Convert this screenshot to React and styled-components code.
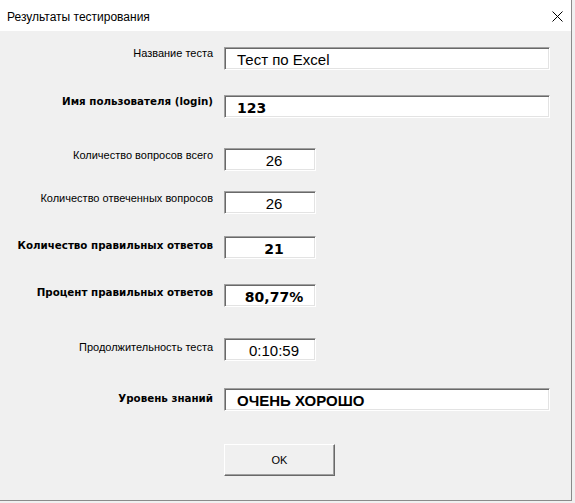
import React from "react";
import styled, { createGlobalStyle } from "styled-components";

const GlobalStyle = createGlobalStyle`
  html, body {
    margin: 0;
    padding: 0;
    background: #f0f0f0;
  }
`;

const rows = [
  { label: "Название теста", value: "Тест по Excel", wide: true, gap: 16, lift: 0 },
  { label: "Имя пользователя (login)", value: "123", wide: true, bold: true, strong: true, gap: 25, lift: 0 },
  { label: "Количество вопросов всего", value: "26", gap: 30, lift: 1 },
  { label: "Количество отвеченных вопросов", value: "26", gap: 20, lift: 1 },
  { label: "Количество правильных ответов", value: "21", bold: true, strong: true, gap: 22, lift: 3 },
  { label: "Процент правильных ответов", value: "80,77%", bold: true, strong: true, gap: 25, lift: 2 },
  { label: "Продолжительность теста", value: "0:10:59", gap: 31, lift: 3 },
  { label: "Уровень знаний", value: "ОЧЕНЬ ХОРОШО", wide: true, bold: true, caps: true, gap: 27, lift: 4 },
];

const Results = () => {
  return (
    <>
      <GlobalStyle />
      <Window>
        <TitleBar>
          <Title>Результаты тестирования</Title>
          <Close aria-label="close">
            <svg width="11" height="11" viewBox="0 0 11 11">
              <path d="M0.5 0.5 L10.5 10.5 M10.5 0.5 L0.5 10.5" stroke="#000" strokeWidth="1" />
            </svg>
          </Close>
        </TitleBar>
        <Content>
          {rows.map((r) => (
            <Row key={r.label} gap={r.gap}>
              <Label bold={r.bold} lift={r.lift}>{r.label}</Label>
              <Field wide={r.wide}>
                <Value wide={r.wide} strong={r.strong} caps={r.caps}>
                  {r.value}
                </Value>
              </Field>
            </Row>
          ))}
          <Row gap={33}>
            <Spacer />
            <Button type="button">OK</Button>
          </Row>
        </Content>
      </Window>
    </>
  );
};

const Window = styled.div`
  width: 571px;
  height: 500px;
  display: flex;
  flex-direction: column;
  border-right: 1px solid #8a8a8a;
  border-bottom: 1px solid #8a8a8a;
  background: #f0f0f0;
`;

const TitleBar = styled.div`
  height: 31px;
  background: #fff;
  display: flex;
  align-items: center;
  justify-content: space-between;
  padding: 0 8px 0 7px;
  box-sizing: border-box;
`;

const Title = styled.span`
  font-family: "Liberation Sans", Arial, sans-serif;
  font-size: 12px;
  color: #000;
  margin-top: 2px;
`;

const Close = styled.div`
  display: flex;
  width: 11px;
  height: 11px;
  margin-top: 1px;
`;

const Content = styled.div`
  flex: 1;
  display: flex;
  flex-direction: column;
`;

const Row = styled.div`
  display: flex;
  align-items: flex-start;
  margin-top: ${(p) => p.gap}px;
`;

const Label = styled.div`
  width: 213px;
  padding-right: 11px;
  box-sizing: content-box;
  text-align: right;
  font-family: ${(p) =>
    p.bold ? '"DejaVu Sans", Verdana, sans-serif' : '"Liberation Sans", Arial, sans-serif'};
  font-size: ${(p) => (p.bold ? "10.3px" : "11px")};
  font-weight: ${(p) => (p.bold ? 700 : 400)};
  line-height: 13px;
  color: #000;
  padding-top: ${(p) => p.lift}px;
`;

const Field = styled.div`
  width: ${(p) => (p.wide ? "326px" : "92px")};
  height: 23px;
  box-sizing: border-box;
  background: #fff;
  border-top: 1px solid #a0a0a0;
  border-left: 1px solid #a0a0a0;
  border-right: 1px solid #fff;
  border-bottom: 1px solid #fff;
  box-shadow: inset 1px 1px 0 #696969, inset -1px -1px 0 #e3e3e3;
  display: flex;
  align-items: center;
  justify-content: ${(p) => (p.wide ? "flex-start" : "center")};
  padding-left: ${(p) => (p.wide ? "12px" : "8px")};
`;

const Value = styled.span`
  font-family: ${(p) =>
    p.strong ? '"DejaVu Sans", Verdana, sans-serif' : '"Liberation Sans", Arial, sans-serif'};
  font-size: ${(p) => (p.strong ? "14px" : "15px")};
  font-weight: ${(p) => (p.strong || p.caps ? 700 : 400)};
  color: #000;
  line-height: 1;
  margin-top: 2px;
  white-space: nowrap;
`;

const Spacer = styled.div`
  width: 224px;
`;

const Button = styled.button`
  width: 111px;
  height: 32px;
  box-sizing: border-box;
  background: #f0f0f0;
  border-top: 1px solid #fff;
  border-left: 1px solid #fff;
  border-right: 1px solid #696969;
  border-bottom: 1px solid #696969;
  box-shadow: inset -1px -1px 0 #a0a0a0;
  font-family: "Liberation Sans", Arial, sans-serif;
  font-size: 11px;
  color: #000;
  padding: 0;
`;

export default Results;
